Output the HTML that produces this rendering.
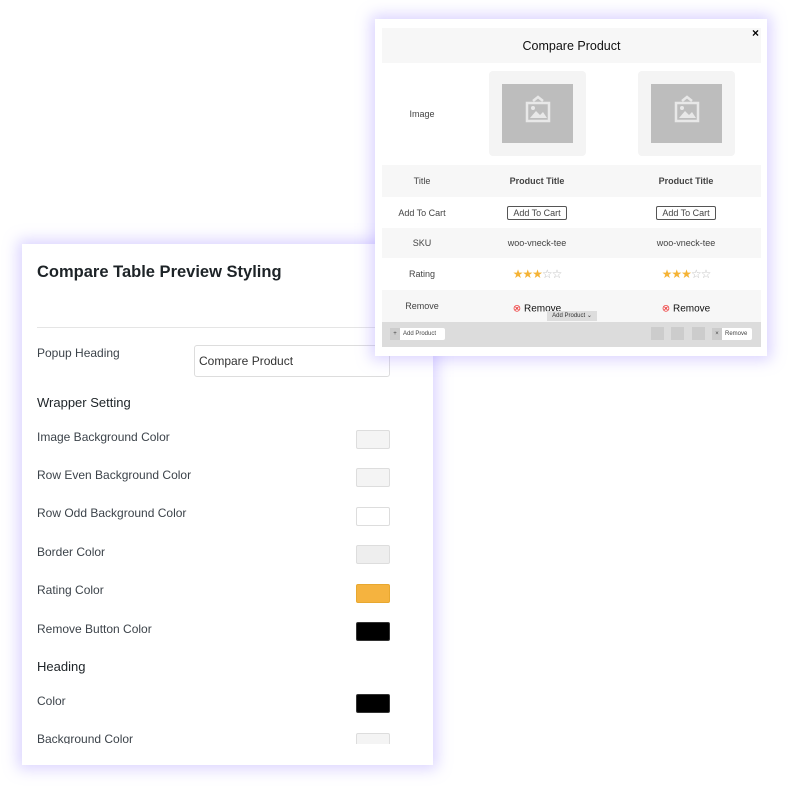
<!DOCTYPE html>
<html><head><style>
body{margin:0;width:801px;height:787px;background:#fff;position:relative;overflow:hidden;font-family:"Liberation Sans",sans-serif;color:#333}
.a{position:absolute}
#left{left:22px;top:244px;width:411px;height:521px;background:#fff;box-shadow:0 0 14px 4px rgba(150,130,255,.35);z-index:1}
.lbl{position:absolute;left:15px;font-size:12px;color:#3c434a;line-height:14px}
.sw{position:absolute;left:334px;width:32px;height:17px;border:1px solid #ddd;border-radius:2px}
#pop{left:375px;top:19px;width:392px;height:337px;background:#fff;box-shadow:0 0 14px 4px rgba(150,130,255,.35);z-index:2}
.row{position:absolute;left:7px;width:379px;font-size:9px;color:#444}
.c{position:absolute;text-align:center;top:50%;transform:translateY(-50%)}
.c0{left:0;width:80px}.c1{left:80px;width:150px}.c2{left:229px;width:150px}
.btn{border:1px solid #555;border-radius:2px;padding:1px 5px;font-size:9px}
.star{color:#f5b335;font-size:12px;letter-spacing:-1px}.star i{color:#bbb;font-style:normal}
.img{position:absolute;width:97px;height:85px;background:#f4f4f4;border-radius:4px;top:8px}
.img div{position:absolute;left:13px;top:13px;width:71px;height:59px;background:#bdbdbd}
.img svg{position:absolute;left:36px;top:23px}
</style></head><body>
<div id="left" class="a">
<div class="a" style="left:15px;top:19px;font-size:16.5px;font-weight:bold;color:#1d2327">Compare Table Preview Styling</div>
<div class="a" style="left:15px;top:83px;width:381px;height:1px;background:#e5e5e5"></div>
<div class="lbl" style="top:102px">Popup Heading</div>
<div class="a" style="left:172px;top:101px;width:190px;height:30px;border:1px solid #ddd;border-radius:3px;font-size:12px;line-height:30px;padding-left:4px;color:#333">Compare Product</div>
<div class="lbl" style="top:152px;font-size:13px;color:#1d2327">Wrapper Setting</div>
<div class="lbl" style="top:186px">Image Background Color</div><div class="sw" style="top:186px;background:#f4f4f4"></div>
<div class="lbl" style="top:224px">Row Even Background Color</div><div class="sw" style="top:224px;background:#f4f4f4"></div>
<div class="lbl" style="top:262px">Row Odd Background Color</div><div class="sw" style="top:263px;background:#fff"></div>
<div class="lbl" style="top:301px">Border Color</div><div class="sw" style="top:301px;background:#eee"></div>
<div class="lbl" style="top:339px">Rating Color</div><div class="sw" style="top:340px;background:#f5b33f;border-color:#e8a830"></div>
<div class="lbl" style="top:378px">Remove Button Color</div><div class="sw" style="top:378px;background:#000;border-color:#333"></div>
<div class="lbl" style="top:416px;font-size:13px;color:#1d2327">Heading</div>
<div class="lbl" style="top:450px">Color</div><div class="sw" style="top:450px;background:#000;border-color:#333"></div>
<div class="a" style="left:0;top:480px;width:411px;height:20px;overflow:hidden">
<div class="lbl" style="top:8px">Background Color</div><div class="sw" style="top:9px;background:#f4f4f4"></div></div>
</div>
<div id="pop" class="a">
<div class="a" style="left:7px;top:9px;width:379px;height:319px;background:#f7f7f7"></div>
<div class="row" style="top:9px;height:35px;background:#f7f7f7"><div class="c" style="left:0;width:379px;font-size:12.5px;color:#111">Compare Product</div></div>
<div class="a" style="left:377px;top:8px;font-size:12px;font-weight:bold;color:#000;line-height:12px">×</div>
<div class="row" style="top:44px;height:102px;background:#fff"><div class="c c0">Image</div>
<div class="img" style="left:107px"><div></div><svg width="26" height="30" viewBox="0 0 26 30" fill="none" stroke="#e8e8e8" stroke-width="2.5"><path d="M8 7 L13 3 L18 7"/><rect x="2" y="9" width="22" height="18"/><path d="M5 24 L11 17 L15 21 L18 18 L22 24Z" fill="#e8e8e8" stroke="none"/><circle cx="8" cy="14" r="2" fill="#e8e8e8" stroke="none"/></svg></div>
<div class="img" style="left:256px"><div></div><svg width="26" height="30" viewBox="0 0 26 30" fill="none" stroke="#e8e8e8" stroke-width="2.5"><path d="M8 7 L13 3 L18 7"/><rect x="2" y="9" width="22" height="18"/><path d="M5 24 L11 17 L15 21 L18 18 L22 24Z" fill="#e8e8e8" stroke="none"/><circle cx="8" cy="14" r="2" fill="#e8e8e8" stroke="none"/></svg></div></div>
<div class="row" style="top:146px;height:32px;background:#f7f7f7"><div class="c c0">Title</div><div class="c c1" style="font-weight:bold">Product Title</div><div class="c c2" style="font-weight:bold">Product Title</div></div>
<div class="row" style="top:178px;height:31px;background:#fff"><div class="c c0">Add To Cart</div><div class="c c1"><span class="btn">Add To Cart</span></div><div class="c c2"><span class="btn">Add To Cart</span></div></div>
<div class="row" style="top:209px;height:30px;background:#f7f7f7"><div class="c c0">SKU</div><div class="c c1">woo-vneck-tee</div><div class="c c2">woo-vneck-tee</div></div>
<div class="row" style="top:239px;height:32px;background:#fff"><div class="c c0">Rating</div><div class="c c1 star">★★★<i>☆☆</i></div><div class="c c2 star">★★★<i>☆☆</i></div></div>
<div class="row" style="top:271px;height:32px;background:#f7f7f7"><div class="c c0">Remove</div><div class="c c1" style="font-size:10px;color:#111;top:60%"><span style="color:#e33">⊗</span> Remove</div><div class="c c2" style="font-size:10px;color:#111;top:60%"><span style="color:#e33">⊗</span> Remove</div></div>
<div class="a" style="left:172px;top:292px;width:50px;height:10px;background:#ddd;font-size:6px;text-align:center;line-height:10px">Add Product ⌄</div>
<div class="row" style="top:303px;height:25px;background:#dcdcdc">
<div class="a" style="left:8px;top:6px;width:55px;height:12px;background:#fff;border-radius:2px;font-size:6px;line-height:12px"><span style="display:inline-block;width:10px;background:#ccc;text-align:center;margin-right:3px">+</span>Add Product</div>
<div class="a" style="left:269px;top:5px;width:13px;height:13px;background:#ccc"></div>
<div class="a" style="left:289px;top:5px;width:13px;height:13px;background:#ccc"></div>
<div class="a" style="left:310px;top:5px;width:13px;height:13px;background:#ccc"></div>
<div class="a" style="left:330px;top:6px;width:40px;height:12px;background:#fff;border-radius:2px;font-size:6px;line-height:12px"><span style="display:inline-block;width:10px;background:#ccc;text-align:center;margin-right:3px">×</span>Remove</div>
</div>
</div>
</body></html>
